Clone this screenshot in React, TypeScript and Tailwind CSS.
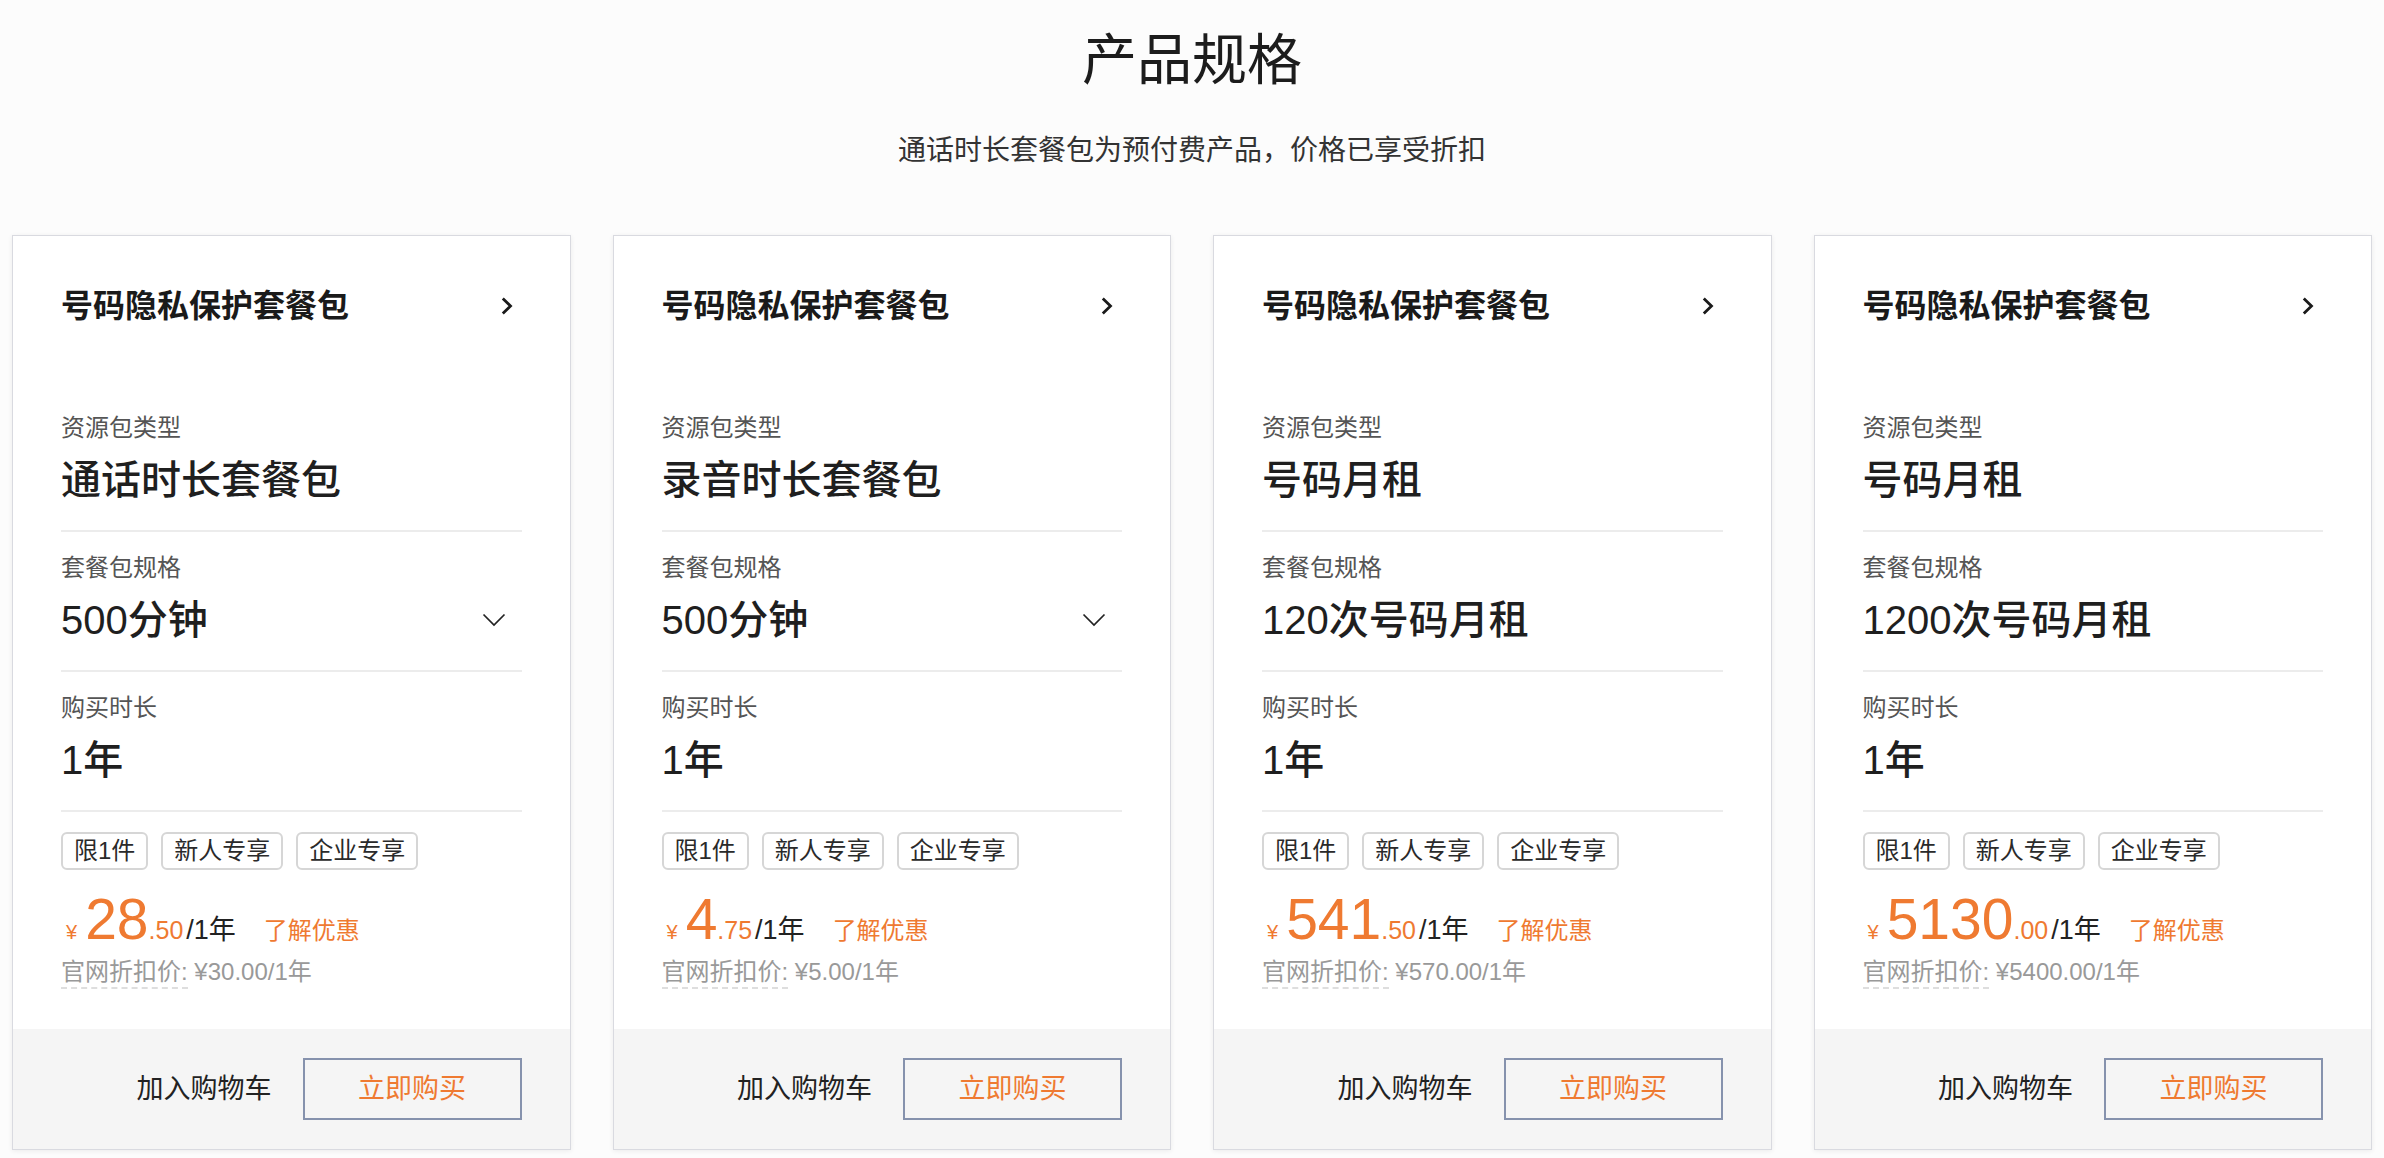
type Plan = {
  type: string;
  spec: string;
  dropdown: boolean;
  yuan: string;
  cents: string;
  list: string;
};

const plans: Plan[] = [
  { type: "通话时长套餐包", spec: "500分钟", dropdown: true, yuan: "28", cents: ".50", list: "¥30.00/1年" },
  { type: "录音时长套餐包", spec: "500分钟", dropdown: true, yuan: "4", cents: ".75", list: "¥5.00/1年" },
  { type: "号码月租", spec: "120次号码月租", dropdown: false, yuan: "541", cents: ".50", list: "¥570.00/1年" },
  { type: "号码月租", spec: "1200次号码月租", dropdown: false, yuan: "5130", cents: ".00", list: "¥5400.00/1年" },
];

function Section({ label, value, dropdown, first }: { label: string; value: string; dropdown?: boolean; first?: boolean }) {
  return (
    <div className={`border-b-2 border-[#ececec] pb-[26px] ${first ? "mt-[64px] pt-[20px]" : "pt-[20px]"}`}>
      <div className="h-[32px] text-[24px] leading-[32px] text-[#555]">{label}</div>
      <div className="mt-[12px] flex h-[48px] items-center justify-between">
        <span className="text-[40px] font-medium leading-[48px] text-[#1f1f1f]">{value}</span>
        {dropdown && (
          <svg width="24" height="14" viewBox="0 0 24 14" className="mr-[16px]" fill="none">
            <path d="M1.5 1.5 L12 12 L22.5 1.5" stroke="#222" strokeWidth="1.7" />
          </svg>
        )}
      </div>
    </div>
  );
}

function Card({ p }: { p: Plan }) {
  return (
    <div className="flex flex-col border border-[#d9dae0] bg-white shadow-[0_1px_5px_rgba(0,0,0,0.07)]">
      <div className="flex flex-col px-[48px] pt-[48px] pb-[40px]">
        <div className="flex h-[44px] items-center justify-between">
          <span className="text-[32px] font-semibold leading-[44px] text-[#1a1a1a]">号码隐私保护套餐包</span>
          <svg width="12" height="18" viewBox="0 0 12 18" className="mr-[9px]" fill="none">
            <path d="M1.8 1.5 L9.5 9 L1.8 16.5" stroke="#1a1a1a" strokeWidth="2.8" />
          </svg>
        </div>
        <Section first label="资源包类型" value={p.type} />
        <Section label="套餐包规格" value={p.spec} dropdown={p.dropdown} />
        <Section label="购买时长" value="1年" />

        <div className="mt-[20px] flex gap-[13px]">
          {["限1件", "新人专享", "企业专享"].map((t) => (
            <span
              key={t}
              className="flex h-[38px] items-center rounded-[6px] border-2 border-[#d6d6d6] px-[11px] text-[24px] leading-none text-[#2a2a2a]"
            >
              {t}
            </span>
          ))}
        </div>

        <div className="mt-[21px] flex items-baseline leading-none">
          <span className="ml-[5px] mr-[8px] text-[20px] text-[#ef7a31]">¥</span>
          <span className="text-[57px] font-medium text-[#ef7a31]">{p.yuan}</span>
          <span className="text-[25px] text-[#ef7a31]">{p.cents}</span>
          <span className="ml-[3px] text-[27px] text-[#222]">/1年</span>
          <span className="ml-[28px] text-[24px] text-[#ef7a31]">了解优惠</span>
        </div>

        <div className="mt-[9px] text-[24px] leading-[30px] text-[#999]">
          <span className="inline-block border-b-2 border-dashed border-[#dedede]">官网折扣价:</span>
          <span> {p.list}</span>
        </div>
      </div>

      <div className="flex h-[120px] items-center justify-end gap-[31px] bg-[#f5f5f5] px-[48px]">
        <span className="text-[27px] text-[#222]">加入购物车</span>
        <button className="flex h-[62px] w-[219px] items-center justify-center border-2 border-[#8692ad] text-[27px] text-[#ef7a31]">
          立即购买
        </button>
      </div>
    </div>
  );
}

export default function App() {
  return (
    <div className="min-h-screen bg-[#fcfcfc] font-['Liberation_Sans','Noto_Sans_CJK_SC',sans-serif]">
      <div className="pt-[28px] text-center">
        <h1 className="text-[55px] font-normal leading-[64px] text-[#1c1c1c]">产品规格</h1>
        <p className="mt-[39px] text-[28px] leading-[40px] text-[#333]">通话时长套餐包为预付费产品，价格已享受折扣</p>
      </div>
      <div className="mt-[64px] grid grid-cols-4 gap-[42px] px-[12px]">
        {plans.map((p, i) => (
          <Card key={i} p={p} />
        ))}
      </div>
    </div>
  );
}
